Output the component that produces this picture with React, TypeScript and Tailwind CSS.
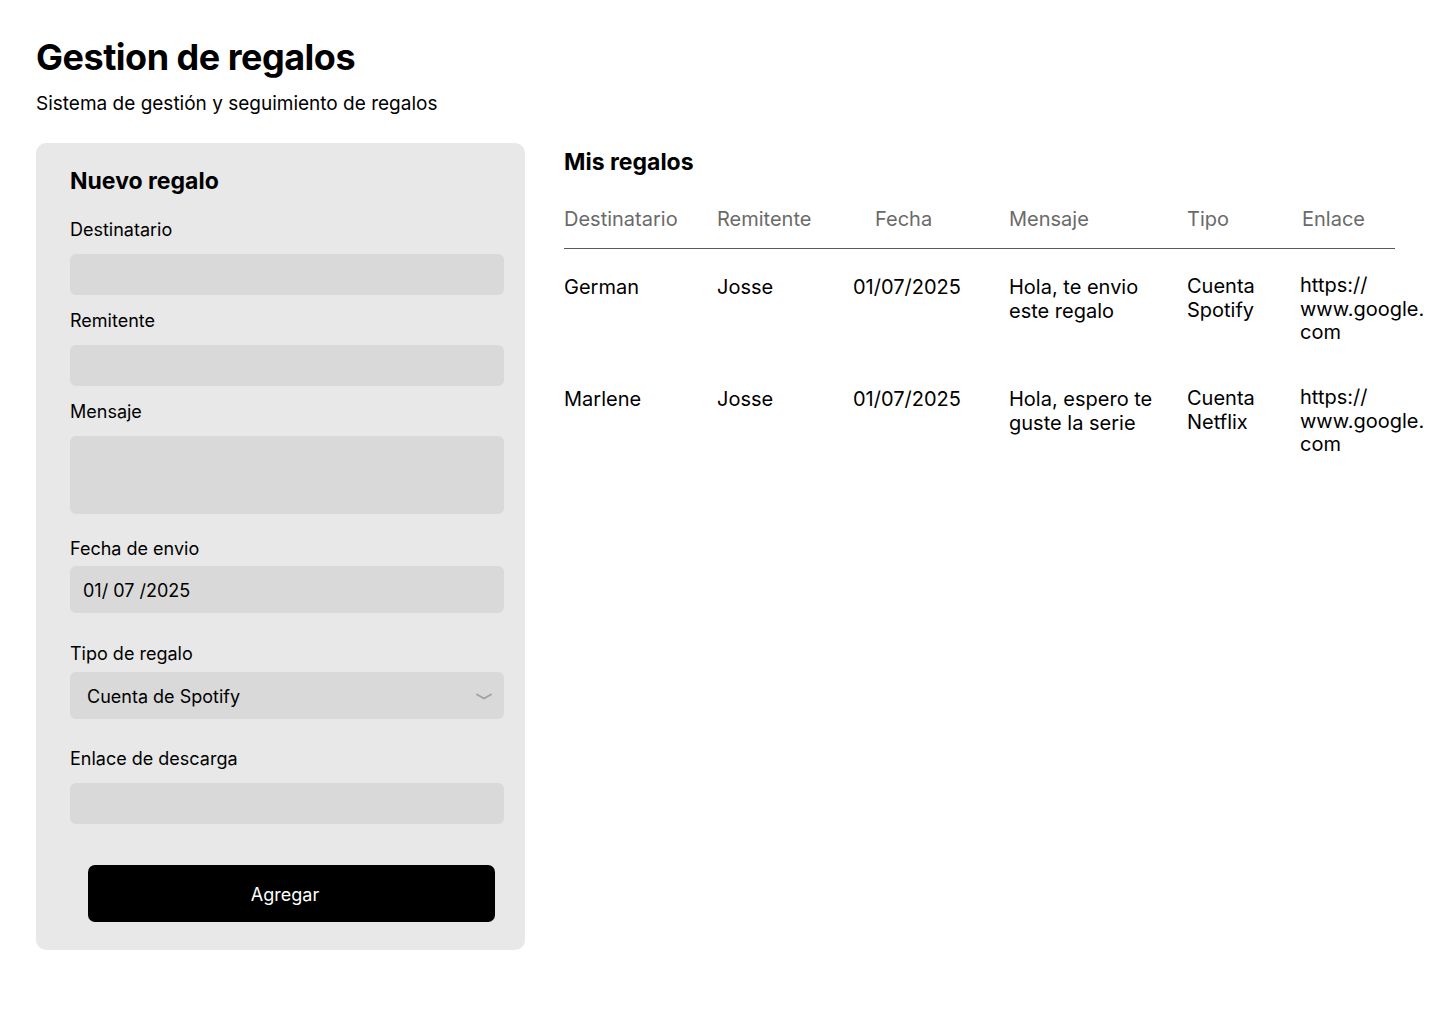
import React from "react";

function Label({ children, className = "" }: { children: React.ReactNode; className?: string }) {
  return <div className={`text-[18px] leading-[22px] text-black ${className}`}>{children}</div>;
}

const rows = [
  {
    dest: "German",
    rem: "Josse",
    fecha: "01/07/2025",
    msg: ["Hola, te envio", "este regalo"],
    tipo: ["Cuenta", "Spotify"],
  },
  {
    dest: "Marlene",
    rem: "Josse",
    fecha: "01/07/2025",
    msg: ["Hola, espero te", "guste la serie"],
    tipo: ["Cuenta", "Netflix"],
  },
];

export default function App() {
  return (
    <div className="min-h-screen bg-white text-black px-9 pt-[35px] font-['Inter','Noto_Sans',sans-serif]">
      <h1 className="text-[36px] font-bold leading-[44px] tracking-[-0.5px]">Gestion de regalos</h1>
      <p className="mt-[13px] text-[19px] leading-[23px]">Sistema de gestión y seguimiento de regalos</p>

      <div className="mt-[28px] flex items-start">
        <div className="w-[489px] h-[807px] rounded-[10px] bg-[#e8e8e8] pl-[34px] pr-[21px] pt-[24px]">
          <h2 className="text-[23px] font-bold leading-[28px]">Nuevo regalo</h2>

          <Label className="mt-[24px]">Destinatario</Label>
          <div className="mt-[13px] h-[41px] rounded-[6px] bg-[#d9d9d9]" />

          <Label className="mt-[15px]">Remitente</Label>
          <div className="mt-[13px] h-[41px] rounded-[6px] bg-[#d9d9d9]" />

          <Label className="mt-[15px]">Mensaje</Label>
          <div className="mt-[13px] h-[78px] rounded-[6px] bg-[#d9d9d9]" />

          <Label className="mt-[24px]">Fecha de envio</Label>
          <div className="mt-[6px] h-[47px] rounded-[6px] bg-[#d9d9d9] flex items-center pl-[13px] pt-[2px] text-[18px] leading-[22px]">
            01/ 07 /2025
          </div>

          <Label className="mt-[30px]">Tipo de regalo</Label>
          <div className="mt-[7px] h-[47px] rounded-[6px] bg-[#d9d9d9] flex items-center justify-between pl-[17px] pr-[11px] pt-[2px] text-[18px] leading-[22px]">
            <span>Cuenta de Spotify</span>
            <svg width="18" height="9" viewBox="0 0 18 9" fill="none">
              <path d="M2 2.5 L9 6.5 L16 2.5" stroke="#a3a3a3" strokeWidth="2" strokeLinecap="round" strokeLinejoin="round" fill="none" />
            </svg>
          </div>

          <Label className="mt-[29px]">Enlace de descarga</Label>
          <div className="mt-[13px] h-[41px] rounded-[6px] bg-[#d9d9d9]" />

          <button className="mt-[41px] ml-[18px] w-[407px] h-[57px] rounded-[7px] bg-black text-white text-[18px] leading-[22px] flex items-center justify-center pr-[13px] pt-[2px]">
            Agregar
          </button>
        </div>

        <div className="ml-[39px] pt-[5px] w-[831px]">
          <h2 className="text-[23px] font-bold leading-[28px]">Mis regalos</h2>

          <div className="mt-[31px] grid grid-cols-[153px_136px_156px_178px_113px_1fr] border-b border-[#5a5a5a] pb-[17px] text-[20px] leading-[24px] text-[#6a6a6a]">
            <div>Destinatario</div>
            <div>Remitente</div>
            <div className="pl-[22px]">Fecha</div>
            <div>Mensaje</div>
            <div>Tipo</div>
            <div className="pl-[2px]">Enlace</div>
          </div>

          <div className="mt-[27px] flex flex-col gap-[40px]">
            {rows.map((r, i) => (
              <div key={i} className="grid grid-cols-[153px_136px_156px_178px_113px_1fr] text-[20px] leading-[23.5px] h-[72px]">
                <div>{r.dest}</div>
                <div>{r.rem}</div>
                <div>{r.fecha}</div>
                <div className="whitespace-nowrap">
                  {r.msg[0]}
                  <br />
                  {r.msg[1]}
                </div>
                <div className="whitespace-nowrap -mt-[1px]">
                  {r.tipo[0]}
                  <br />
                  {r.tipo[1]}
                </div>
                <div className="whitespace-nowrap -mt-[2px]">
                  https://
                  <br />
                  www.google.
                  <br />
                  com
                </div>
              </div>
            ))}
          </div>
        </div>
      </div>
    </div>
  );
}
